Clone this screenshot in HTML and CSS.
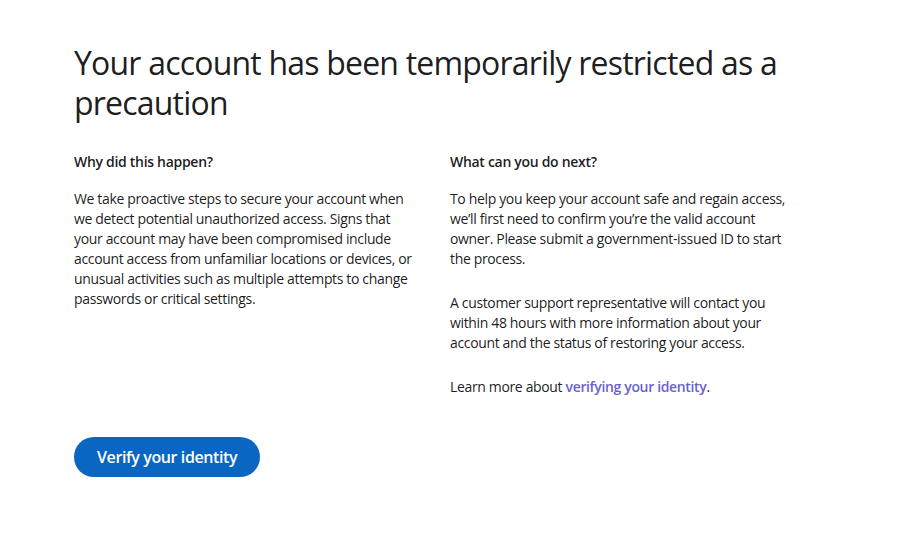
FILE: index.html
```html
<!DOCTYPE html>
<html lang="en">
<head>
<meta charset="utf-8">
<title>Account restricted</title>
<link rel="stylesheet" href="styles.css">
</head>
<body>
<main class="page">
  <h1 class="title">Your account has been temporarily restricted as a precaution</h1>
  <div class="columns">
    <section class="col">
      <h2 class="subtitle">Why did this happen?</h2>
      <p class="text">We take proactive steps to secure your account when we detect potential unauthorized access. Signs that your account may have been compromised include account access from unfamiliar locations or devices, or unusual activities such as multiple attempts to change passwords or critical settings.</p>
    </section>
    <section class="col">
      <h2 class="subtitle">What can you do next?</h2>
      <p class="text">To help you keep your account safe and regain access, we’ll first need to confirm you’re the valid account owner. Please submit a government-issued ID to start the process.</p>
      <p class="text">A customer support representative will contact you within 48 hours with more information about your account and the status of restoring your access.</p>
      <p class="text">Learn more about <a class="link" href="#">verifying your identity</a>.</p>
    </section>
  </div>
  <button class="btn" type="button">Verify your identity</button>
</main>
</body>
</html>
```

FILE: styles.css
```css
* { box-sizing: border-box; }
html, body { margin: 0; padding: 0; background: #ffffff; }
body {
  font-family: "Open Sans", "Noto Sans", "Liberation Sans", sans-serif;
  color: rgba(0, 0, 0, 0.9);
}
.page {
  padding: 43px 0 0 74px;
  width: 800px;
}
.title {
  margin: 0;
  font-size: 32px;
  line-height: 40px;
  font-weight: 400;
  letter-spacing: -0.8px;
  width: 716px;
}
.columns {
  display: grid;
  grid-template-columns: 340px 340px;
  column-gap: 36px;
  margin-top: 29px;
}
.subtitle {
  margin: 0 0 17px;
  font-size: 14px;
  line-height: 20px;
  font-weight: 600;
  letter-spacing: -0.3px;
}
.text {
  margin: 0 0 24px;
  font-size: 14px;
  line-height: 20px;
  font-weight: 400;
  letter-spacing: -0.35px;
}
.text:last-child { margin-bottom: 0; }
.link {
  color: #6a5fd0;
  font-weight: 600;
  text-decoration: none;
}
.btn {
  margin-top: 40px;
  height: 40px;
  padding: 0 23px;
  border: 0;
  border-radius: 20px;
  background: #0a66c2;
  color: #ffffff;
  font-family: inherit;
  font-size: 16px;
  font-weight: 600;
  letter-spacing: -0.4px;
  cursor: pointer;
}
```
